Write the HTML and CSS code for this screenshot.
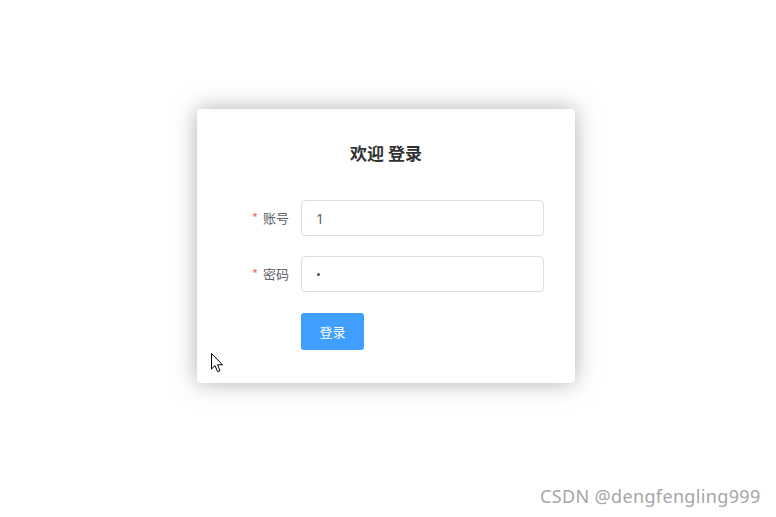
FILE: index.html
```html
<!DOCTYPE html>
<html lang="zh">
<head>
<meta charset="utf-8">
<link rel="stylesheet" href="styles.css">
</head>
<body>
<div class="page">
  <div class="card">
    <h3 class="title">欢迎 登录</h3>
    <form class="form">
      <div class="row">
        <label class="label"><span class="star">*</span>账号</label>
        <div class="input">1</div>
      </div>
      <div class="row">
        <label class="label"><span class="star">*</span>密码</label>
        <div class="input"><span class="dot"></span></div>
      </div>
      <div class="row btn-row">
        <button type="button" class="btn">登录</button>
      </div>
    </form>
  </div>
</div>
<svg class="cursor" width="13" height="20" viewBox="0 0 13 20">
  <path d="M0.5 0.5 L0.5 16 L4 12.6 L6.6 18.6 L9 17.6 L6.5 11.8 L11.5 11.8 Z" fill="#fff" stroke="#000" stroke-width="1" stroke-linejoin="miter"/>
</svg>
<div class="watermark">CSDN @dengfengling999</div>
</body>
</html>
```
FILE: styles.css
```css
html, body {
  margin: 0;
  padding: 0;
  background: #fff;
  font-family: "Noto Sans CJK SC", "Noto Sans", sans-serif;
}
.page {
  width: 776px;
  height: 517px;
  padding: 109px 0 0 197px;
  box-sizing: border-box;
}
.card {
  width: 378px;
  height: 274px;
  box-sizing: border-box;
  background: #fff;
  border-radius: 4px;
  box-shadow: 0 0 22px rgba(110, 112, 120, 0.55);
  padding: 30px 31px 0 24px;
}
.title {
  margin: 0;
  text-align: center;
  font-size: 17px;
  font-weight: 700;
  color: #303133;
  line-height: 28px;
  padding-left: 7px;
}
.form {
  margin-top: 33px;
}
.row {
  display: flex;
  align-items: center;
  height: 36px;
  margin-bottom: 20px;
}
.label {
  width: 80px;
  box-sizing: border-box;
  padding-right: 12px;
  padding-bottom: 2px;
  text-align: right;
  font-size: 13px;
  color: #606266;
}
.star {
  color: #f56c6c;
  margin-right: 5px;
}
.input {
  flex: 1;
  height: 36px;
  box-sizing: border-box;
  border: 1px solid #dcdfe6;
  border-radius: 4px;
  padding-left: 14px;
  font-family: "Noto Sans", sans-serif;
  font-size: 14px;
  color: #606266;
  display: flex;
  align-items: center;
}
.dot {
  width: 3px;
  height: 3px;
  border-radius: 50%;
  background: #505363;
  margin-left: 1px;
  margin-top: 1px;
}
.btn-row {
  margin-top: 21px;
  height: 37px;
  padding-left: 80px;
}
.btn {
  width: 63px;
  height: 37px;
  border: none;
  border-radius: 3px;
  background: #409eff;
  color: #fff;
  font-family: "Noto Sans CJK SC", sans-serif;
  font-size: 13px;
  padding: 0;
}
.cursor {
  position: absolute;
  left: 211px;
  top: 353px;
}
.watermark {
  position: absolute;
  left: 540px;
  top: 484px;
  font-family: "Noto Sans", sans-serif;
  font-size: 18px;
  letter-spacing: 0.35px;
  color: #a6a6a6;
  text-shadow: 0 0 1px #fff;
}
```
